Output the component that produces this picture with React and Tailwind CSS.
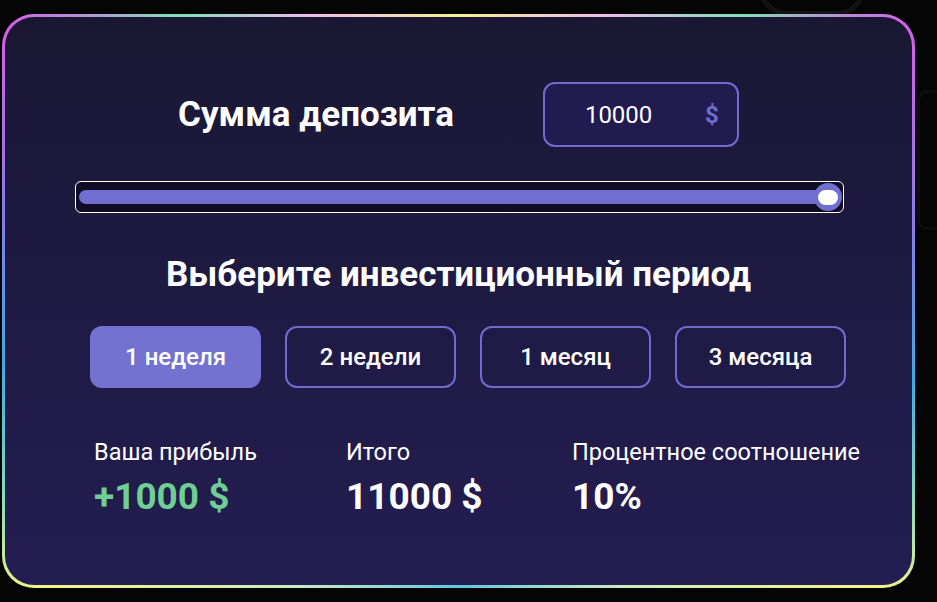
export default function App() {
  const periods = ["1 неделя", "2 недели", "1 месяц", "3 месяца"];
  return (
    <div className="w-[937px] h-[602px] bg-[#050505] overflow-hidden font-['Roboto','Noto_Sans',sans-serif] relative">
      <div className="absolute right-[70px] top-[-46px] w-[110px] h-[62px] rounded-full border-[5px] border-[#131313]"></div>
      <div className="absolute right-[-20px] top-[90px] w-[40px] h-[140px] rounded-[10px] border-[3px] border-[#0e0e0e]"></div>
      <div className="relative ml-[2px] mt-[14px] w-[913px] h-[574px] rounded-[32px] p-[3px] bg-[conic-gradient(from_0deg_at_50%_50%,#f6f08c_0deg,#f0b8ee_28deg,#7fe0b8_45deg,#d860e8_58deg,#8a7be6_80deg,#3fa8e6_100deg,#7ed8c0_112deg,#f2f488_124deg,#c8ecc0_150deg,#5ec8e0_180deg,#c8ecc0_210deg,#f2f488_236deg,#7ed8c0_248deg,#3fa8e6_262deg,#8a7be6_282deg,#d860e8_302deg,#7fe0b8_315deg,#f0b8ee_332deg,#f6f08c_360deg)]">
        <div className="w-full h-full rounded-[29px] bg-gradient-to-b from-[#1a1734] to-[#241d52] flex flex-col">
          <div className="mt-[65px] flex items-center justify-center gap-[89px]">
            <div className="text-white font-bold text-[35px] leading-[40px]">Сумма депозита</div>
            <div className="w-[196px] h-[65px] rounded-[12px] border-2 border-[#6f6cd0] bg-[#211b4f] flex items-center justify-between pl-[40px] pr-[18px]">
              <span className="text-white text-[24px]">10000</span>
              <span className="text-[#6f6cd0] text-[24px] font-bold">$</span>
            </div>
          </div>
          <div className="mt-[34px] ml-[70px] w-[769px] h-[32px] rounded-[6px] border border-white bg-[#0f0c24] flex items-center pl-[3px] pr-[1px]">
            <div className="flex-1 h-[14px] rounded-full bg-[#716ed2]"></div>
            <div className="ml-[-14px] w-[28px] h-[28px] rounded-full bg-[#716ed2] flex items-center justify-center">
              <div className="w-[20px] h-[15px] rounded-full bg-white"></div>
            </div>
          </div>
          <div className="mt-[42px] text-center text-white font-bold text-[35px] leading-[40px]">
            Выберите инвестиционный период
          </div>
          <div className="mt-[31px] ml-[85px] flex gap-[24px]">
            {periods.map((p, i) => (
              <div
                key={p}
                className={
                  i === 0
                    ? "w-[171px] h-[62px] rounded-[12px] bg-[#7472d1] flex items-center justify-center text-white text-[24px] font-medium"
                    : "w-[171px] h-[62px] rounded-[12px] border-2 border-[#6f6cd0] flex items-center justify-center text-white text-[24px] font-medium"
                }
              >
                {p}
              </div>
            ))}
          </div>
          <div className="mt-[50px] ml-[89px] flex">
            <div className="w-[252px]">
              <div className="text-white text-[23.5px] leading-[28px]">Ваша прибыль</div>
              <div className="mt-[10px] text-[#6fcf93] text-[37px] leading-[42px] font-bold">+1000 $</div>
            </div>
            <div className="w-[226px]">
              <div className="text-white text-[23.5px] leading-[28px]">Итого</div>
              <div className="mt-[10px] text-white text-[37px] leading-[42px] font-bold">11000 $</div>
            </div>
            <div>
              <div className="text-white text-[23.5px] leading-[28px]">Процентное соотношение</div>
              <div className="mt-[10px] text-white text-[37px] leading-[42px] font-bold">10%</div>
            </div>
          </div>
        </div>
      </div>
    </div>
  );
}
